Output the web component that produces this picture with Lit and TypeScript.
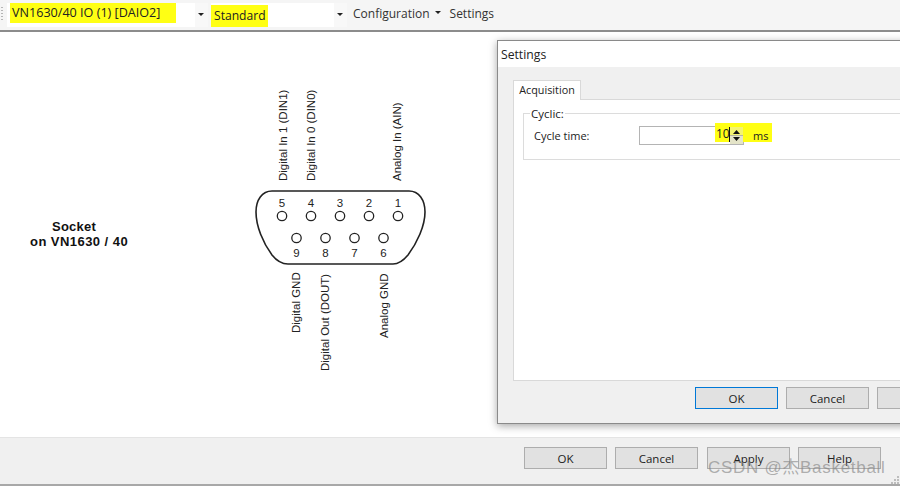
import { LitElement, html, css, svg } from "lit";
import { customElement } from "lit/decorators.js";

const arrow = () => html`<svg width="7" height="4" viewBox="0 0 7 4"><path d="M0 0h6L3 3z" fill="#222"/></svg>`;

const topPins = [[282, "5"], [311, "4"], [340, "3"], [369, "2"], [398, "1"]] as const;
const botPins = [[296.5, "9"], [325.5, "8"], [354.5, "7"], [383.5, "6"]] as const;

@customElement("app-root")
export class AppRoot extends LitElement {
  static styles = css`
    :host { display: flex; flex-direction: column; width: 900px; height: 486px; position: relative; overflow: hidden;
      font-family: "Open Sans", "Noto Sans", sans-serif; font-size: 12px; color: #222; background: #fff; }
    .toolbar { height: 32px; flex: none; display: flex; align-items: center; background: #f5f5f5; box-sizing: border-box;
      border-bottom: 2px solid #8c8c8c; padding: 0 0 0 1px; }
    .grip { width: 2px; height: 15px; margin: 0 4px 2px 0; flex: none; background: repeating-linear-gradient(to bottom, #b5b5b5 0 1px, transparent 1px 3px); }
    .combo { height: 24px; background: #fff; display: flex; align-items: center; justify-content: space-between; box-sizing: border-box; }
    .combo.a { width: 201px; margin-right: 3px; }
    .combo.b { width: 136px; margin-right: 6px; }
    .combo .val { background: #ffff14; height: 20px; line-height: 20px; box-sizing: border-box; }
    .combo.a .val { width: 166px; padding-left: 2px; margin: -4px 0 0 3px; font-size: 12.6px; }
    .combo.b .val { width: 57px; padding-left: 3px; height: 22px; line-height: 22px; margin-top: 1px; font-size: 12.1px; }
    .btnarrow { width: 13px; height: 24px; background: #f8f8f8; display: flex; align-items: center; justify-content: center; }
    .menu { font-size: 12px; color: #333; display: flex; align-items: center; margin-top: -4px; }
    .menu.cfg { gap: 5px; margin-right: 8px; }
    .main { flex: 1; position: relative; background: #fff; }
    .socket { position: absolute; left: 30px; top: 187px; width: 98px; font-family: "Liberation Sans", Arial, sans-serif;
      font-weight: 700; font-size: 13px; line-height: 15px; color: #111; white-space: nowrap; letter-spacing: .45px; }
    .socket .l1 { padding-left: 22px; letter-spacing: .25px; }
    .conn { position: absolute; left: 0; top: 0; }
    .conn text { font-family: "Liberation Sans", Arial, sans-serif; font-size: 11.5px; fill: #222; }
    .footer { height: 49px; flex: none; display: flex; justify-content: flex-end; gap: 8px; background: #f0f0f0; box-sizing: border-box;
      border-top: 1px solid #e4e4e4; border-bottom: 2px solid #a8a8a8; padding: 9px 19px 0 0; }
    .btn { width: 83px; height: 22px; box-sizing: border-box; background: #e1e1e1; border: 1px solid #adadad; display: flex; align-items: center; justify-content: center;
      font-size: 11.5px; color: #222; flex: none; }
    .btn.wide { margin-right: 1px; }
    .btn.def { border: 1.5px solid #0078d7; }
    .dialog { position: absolute; left: 497px; top: 40px; width: 420px; height: 384px; box-sizing: border-box; border: 1px solid #8a8a8a;
      background: #f0f0f0; box-shadow: 0 2px 8px rgba(0,0,0,.35); display: flex; flex-direction: column; }
    .title { height: 26px; flex: none; background: #fff; padding: 0 0 0 3px; line-height: 27px; font-size: 12.2px; color: #222; }
    .body { flex: 1; padding: 13px 0 0 15px; display: flex; flex-direction: column; }
    .tab { width: 68px; height: 20px; box-sizing: border-box; background: #fff; border: 1px solid #d9d9d9; border-bottom: none; margin-bottom: -1px;
      font-size: 10.8px; text-align: center; line-height: 17px; position: relative; z-index: 1; }
    .panel { height: 282px; background: #fff; border: 1px solid #d9d9d9; box-sizing: border-box; padding: 13px 0 0 9px; }
    .group { height: 47px; border: 1px solid #dcdcdc; border-right: none; position: relative; display: flex; align-items: center; padding: 2px 0 0 10px; box-sizing: border-box; }
    .legend { position: absolute; left: 6px; top: -7px; background: #fff; padding: 0 1px; font-size: 11.5px; line-height: 13px; }
    .lbl { width: 105px; font-size: 11px; flex: none; margin-top: -4px; }
    .field { position: relative; width: 105px; height: 19px; border: 1px solid #b4b4b4; box-sizing: border-box; background: #fff; margin-top: -4px; flex: none; }
    .hl { position: absolute; background: #ffff14; }
    .hl.n { left: 75px; top: -4px; width: 15px; height: 19px; }
    .hl.r { left: 90px; top: -4px; width: 42px; height: 19px; }
    .num { position: absolute; left: 76px; top: -1px; font-size: 12px; line-height: 16px; color: #222; }
    .caret { position: absolute; left: 89px; top: 0; width: 1px; height: 15px; background: #111; }
    .spin { position: absolute; left: 90px; top: 0; width: 13px; height: 17px; display: flex; flex-direction: column; align-items: center; justify-content: space-between;
      background: linear-gradient(to bottom, #f4f470 0 8px, #b4b4a0 8px 9px, #e4e4c8 9px); padding: 3px 0; box-sizing: border-box; }
    .ms { position: absolute; left: 113px; top: 1px; font-size: 11px; line-height: 15px; color: #222; }
    .actions { display: flex; gap: 8px; padding: 6px 0 0 182px; }
    .sizegrip { position: absolute; right: 1px; bottom: 2px; width: 8px; height: 8px; }
    .watermark { position: absolute; left: 708px; top: 457px; font-size: 17px; line-height: 22px; color: rgba(130,130,130,.62); white-space: nowrap;
      font-family: "Liberation Sans", "Noto Sans CJK SC", sans-serif; letter-spacing: .7px; }
  `;

  render() {
    const y = 32;
    return html`
      <div class="toolbar">
        <div class="grip"></div>
        <div class="combo a"><div class="val">VN1630/40 IO (1) [DAIO2]</div><div class="btnarrow">${arrow()}</div></div>
        <div class="combo b"><div class="val">Standard</div><div class="btnarrow">${arrow()}</div></div>
        <div class="menu cfg"><span>Configuration</span>${arrow()}</div>
        <div class="menu">Settings</div>
      </div>
      <div class="main">
        <div class="socket"><div class="l1">Socket</div><div>on VN1630 / 40</div></div>
        <svg class="conn" width="497" height="405" viewBox="0 ${y} 497 405">
          <path d="M272 191H409C419 191 425 200 425 212C425 226 417 243 408 255C403 261 399 264 393 264H288C281 264 276 260 272 255C263 243 256 226 256 212C256 200 262 191 272 191Z" fill="none" stroke="#222" stroke-width="1.6"/>
          ${topPins.map(([x, n]) => svg`<circle cx=${x} cy="216" r="4.7" fill="#fff" stroke="#222" stroke-width="1.3"/><text x=${x} y="207" text-anchor="middle">${n}</text>`)}
          ${botPins.map(([x, n]) => svg`<circle cx=${x} cy="238" r="4.7" fill="#fff" stroke="#222" stroke-width="1.3"/><text x=${x} y="257" text-anchor="middle">${n}</text>`)}
          <text transform="translate(287 181) rotate(-90)">Digital In 1 (DIN1)</text>
          <text transform="translate(315 181) rotate(-90)">Digital In 0 (DIN0)</text>
          <text transform="translate(401 181) rotate(-90)">Analog In (AIN)</text>
          <text transform="translate(300 333) rotate(-90)">Digital GND</text>
          <text transform="translate(329 371) rotate(-90)">Digital Out (DOUT)</text>
          <text transform="translate(388 338) rotate(-90)">Analog GND</text>
        </svg>
      </div>
      <div class="footer">
        <div class="btn">OK</div><div class="btn wide">Cancel</div><div class="btn">Apply</div><div class="btn">Help</div>
      </div>
      <div class="dialog">
        <div class="title">Settings</div>
        <div class="body">
          <div class="tab">Acquisition</div>
          <div class="panel">
            <div class="group">
              <div class="legend">Cyclic:</div>
              <div class="lbl">Cycle time:</div>
              <div class="field">
                <div class="hl n"></div><div class="hl r"></div>
                <div class="num">10</div><div class="caret"></div>
                <div class="spin">
                  <svg width="7" height="4" viewBox="0 0 7 4"><path d="M3.5 0L7 4H0z" fill="#111"/></svg>
                  <svg width="7" height="4" viewBox="0 0 7 4"><path d="M0 0h7L3.5 4z" fill="#111"/></svg>
                </div>
                <div class="ms">ms</div>
              </div>
            </div>
          </div>
          <div class="actions">
            <div class="btn def">OK</div><div class="btn">Cancel</div><div class="btn"></div>
          </div>
        </div>
      </div>
      <div class="watermark">CSDN @杰Basketball</div>
      <svg class="sizegrip" viewBox="0 0 8 8"><path d="M6 0h2v2H6zM3 3h2v2H3zM6 3h2v2H6zM0 6h2v2H0zM3 6h2v2H3zM6 6h2v2H6z" fill="#bdbdbd"/></svg>
    `;
  }
}
